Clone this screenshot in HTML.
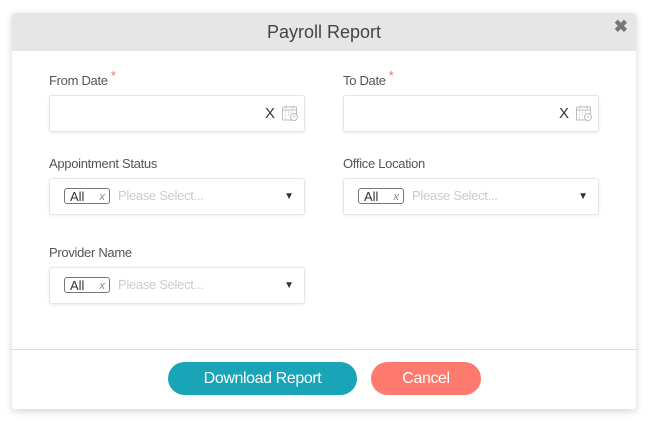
<!DOCTYPE html>
<html><head><style>
body{margin:0;width:649px;height:427px;background:#fff;font-family:"Liberation Sans",sans-serif;position:relative;overflow:hidden}
.modal{position:absolute;left:12px;top:13px;width:624px;height:396px;background:#fff;box-shadow:0 2px 8px rgba(0,0,0,.18);border-radius:3px}
.hdr{height:38px;background:#e6e6e6;text-align:center;font-size:18px;line-height:38px;color:#444;border-radius:3px 3px 0 0}
.cl{position:absolute;right:8px;top:4px;font-size:17px;color:#777;font-weight:bold}
.lbl{position:absolute;font-size:13px;color:#555;letter-spacing:-0.3px}
.lbl b{color:#f07060;font-weight:normal;position:relative;top:-5px;margin-left:3px}
.box{position:absolute;width:254px;height:35px;border:1px solid #e6e6e6;border-radius:3px;box-shadow:0 1px 3px rgba(0,0,0,.08);background:#fff}
.dx{position:absolute;right:29px;top:9px;font-size:15px;color:#333}
.cal{position:absolute;right:5px;top:8px}
.tag{position:absolute;left:14px;top:9px;width:46px;height:16px;border:1px solid #777;border-radius:3px;font-size:13px;line-height:15px;color:#333;box-sizing:border-box;padding-left:5px}
.tag i{position:absolute;right:4px;top:1px;font-size:11px;color:#888}
.ph{position:absolute;left:68px;top:9px;font-size:13px;color:#ccc;letter-spacing:-0.3px}
.ar{position:absolute;right:10px;top:12px;font-size:10px;color:#333}
.line{position:absolute;left:0;right:0;top:336px;border-top:1px solid #ddd}
.btn{position:absolute;top:349px;height:33px;border-radius:17px;color:#fff;font-size:16px;text-align:center;line-height:33px;letter-spacing:-0.4px}
</style></head><body>
<div class="modal">
<div class="hdr">Payroll Report</div><div class="cl">✖</div>
<div class="lbl" style="left:37px;top:60px">From Date<b>*</b></div>
<div class="lbl" style="left:331px;top:60px">To Date<b>*</b></div>
<div class="box" style="left:37px;top:82px"><span class="dx">X</span><svg class="cal" width="18" height="18" viewBox="0 0 18 18" fill="none" stroke="#bbb" stroke-width="1"><rect x="1.5" y="3" width="14" height="13" rx="1"/><path d="M1.5 6h14M5 1.5v3M12 1.5v3M4 8h1M7 8h1M10 8h1M4 11h1M7 11h1M4 14h1"/><circle cx="13" cy="13" r="3.5" fill="#fff"/><path d="M13 11.5v1.5h1.2"/></svg></div>
<div class="box" style="left:331px;top:82px"><span class="dx">X</span><svg class="cal" width="18" height="18" viewBox="0 0 18 18" fill="none" stroke="#bbb" stroke-width="1"><rect x="1.5" y="3" width="14" height="13" rx="1"/><path d="M1.5 6h14M5 1.5v3M12 1.5v3M4 8h1M7 8h1M10 8h1M4 11h1M7 11h1M4 14h1"/><circle cx="13" cy="13" r="3.5" fill="#fff"/><path d="M13 11.5v1.5h1.2"/></svg></div>
<div class="lbl" style="left:37px;top:143px">Appointment Status</div>
<div class="lbl" style="left:331px;top:143px">Office Location</div>
<div class="box" style="left:37px;top:165px"><span class="tag">All<i>x</i></span><span class="ph">Please Select...</span><span class="ar">▼</span></div>
<div class="box" style="left:331px;top:165px"><span class="tag">All<i>x</i></span><span class="ph">Please Select...</span><span class="ar">▼</span></div>
<div class="lbl" style="left:37px;top:232px">Provider Name</div>
<div class="box" style="left:37px;top:254px"><span class="tag">All<i>x</i></span><span class="ph">Please Select...</span><span class="ar">▼</span></div>
<div class="line"></div>
<div class="btn" style="left:156px;width:189px;background:#19a4b8">Download Report</div>
<div class="btn" style="left:359px;width:110px;background:#ff7a6e">Cancel</div>
</div>
</body></html>
